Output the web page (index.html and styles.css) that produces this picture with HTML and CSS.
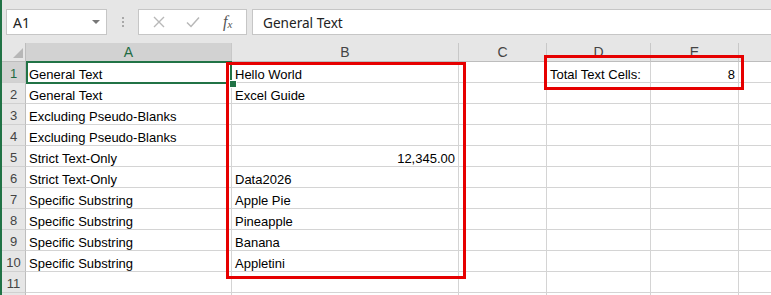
FILE: index.html
```html
<!DOCTYPE html>
<html>
<head>
<meta charset="utf-8">
<link rel="stylesheet" href="styles.css">
</head>
<body>
<div class="app">
  <div class="toolbar">
    <div class="namebox"><span class="nb-text">A1</span><span class="nb-arrow"></span></div>
    <div class="dots"><i></i><i></i><i></i></div>
    <div class="fxbox">
      <svg class="ico" width="14" height="14" viewBox="0 0 14 14"><path d="M2 2 L12 12 M12 2 L2 12" stroke="#b8b8b8" stroke-width="1.4" fill="none"/></svg>
      <svg class="ico" width="16" height="14" viewBox="0 0 16 14"><path d="M2 7.5 L6 11.5 L14 2.5" stroke="#b8b8b8" stroke-width="1.5" fill="none"/></svg>
      <span class="fx">f<sub>x</sub></span>
    </div>
    <div class="formula">General Text</div>
  </div>
  <div class="sheet">
    <div class="corner"><span class="tri"></span></div>
    <div class="ch sel">A</div><div class="ch">B</div><div class="ch">C</div><div class="ch">D</div><div class="ch">E</div><div class="ch last"></div>

    <div class="rh sel">1</div><div class="c">General Text</div><div class="c">Hello World</div><div class="c"></div><div class="c">Total Text Cells:</div><div class="c r">8</div><div class="c last"></div>
    <div class="rh">2</div><div class="c">General Text</div><div class="c">Excel Guide</div><div class="c"></div><div class="c"></div><div class="c"></div><div class="c last"></div>
    <div class="rh">3</div><div class="c">Excluding Pseudo-Blanks</div><div class="c"></div><div class="c"></div><div class="c"></div><div class="c"></div><div class="c last"></div>
    <div class="rh">4</div><div class="c">Excluding Pseudo-Blanks</div><div class="c"></div><div class="c"></div><div class="c"></div><div class="c"></div><div class="c last"></div>
    <div class="rh">5</div><div class="c">Strict Text-Only</div><div class="c r">12,345.00</div><div class="c"></div><div class="c"></div><div class="c"></div><div class="c last"></div>
    <div class="rh">6</div><div class="c">Strict Text-Only</div><div class="c">Data2026</div><div class="c"></div><div class="c"></div><div class="c"></div><div class="c last"></div>
    <div class="rh">7</div><div class="c">Specific Substring</div><div class="c">Apple Pie</div><div class="c"></div><div class="c"></div><div class="c"></div><div class="c last"></div>
    <div class="rh">8</div><div class="c">Specific Substring</div><div class="c">Pineapple</div><div class="c"></div><div class="c"></div><div class="c"></div><div class="c last"></div>
    <div class="rh">9</div><div class="c">Specific Substring</div><div class="c">Banana</div><div class="c"></div><div class="c"></div><div class="c"></div><div class="c last"></div>
    <div class="rh">10</div><div class="c">Specific Substring</div><div class="c">Appletini</div><div class="c"></div><div class="c"></div><div class="c"></div><div class="c last"></div>
    <div class="rh">11</div><div class="c"></div><div class="c"></div><div class="c"></div><div class="c"></div><div class="c"></div><div class="c last"></div>
    <div class="rh"></div><div class="c"></div><div class="c"></div><div class="c"></div><div class="c"></div><div class="c"></div><div class="c last"></div>
  </div>
  <div class="selbox"></div>
  <div class="handle"></div>
  <div class="redbox rb1"></div>
  <div class="redbox rb2"></div>
</div>
</body>
</html>
```
FILE: styles.css
```css
html, body { margin: 0; padding: 0; }
body { width: 771px; height: 295px; overflow: hidden; background: #fff; }
.app {
  position: relative;
  width: 771px; height: 295px; overflow: hidden;
  border-left: 2px solid #217346;
  box-sizing: border-box;
  font-family: "Liberation Sans", Arial, sans-serif;
}
.toolbar {
  height: 43px;
  background: #e6e6e6;
  display: flex;
  align-items: flex-start;
  padding: 9px 0 0 4px;
  box-sizing: border-box;
}
.namebox {
  width: 101px; height: 26px;
  background: #fff; border: 1px solid #c6c6c6;
  box-sizing: border-box;
  display: flex; align-items: center; justify-content: space-between;
  padding: 0 6px 0 6px;
  font-family: "Noto Sans", "Open Sans", sans-serif; font-size: 14px; color: #222;
}
.nb-arrow {
  width: 0; height: 0;
  border-left: 4px solid transparent; border-right: 4px solid transparent;
  border-top: 4px solid #777;
}
.dots {
  width: 31px; height: 26px;
  display: flex; flex-direction: column; align-items: center; justify-content: center; gap: 2px;
}
.dots i { display: block; width: 2px; height: 2px; background: #a8a8a8; }
.fxbox {
  width: 109px; height: 26px;
  background: #fff; border: 1px solid #c6c6c6; box-sizing: border-box;
  display: flex; align-items: center;
  padding-left: 13px; gap: 19px;
}
.fx {
  font-family: "Liberation Serif", "DejaVu Serif", serif; font-style: italic;
  font-size: 16px; color: #555; margin-left: 3px;
}
.fx sub { font-size: 11px; vertical-align: -1px; }
.formula {
  flex: 1; height: 26px; margin-left: 5px;
  background: #fff; border: 1px solid #c6c6c6; border-right: none; box-sizing: border-box;
  display: flex; align-items: center; padding-left: 10px;
  font-family: "Noto Sans", "Open Sans", sans-serif; font-size: 13.6px; color: #222;
}
.sheet {
  display: grid;
  grid-template-columns: 24px 206px 227px 88px 104px 88px 1fr;
  grid-template-rows: 19px;
  grid-auto-rows: 21px;
}
.corner {
  background: #e6e6e6;
  border-right: 1px solid #bdbdbd; border-bottom: 1px solid #bdbdbd;
  box-sizing: border-box; position: relative;
  display: flex; align-items: flex-end; justify-content: flex-end;
  padding: 0 2px 3px 0;
}
.tri {
  width: 0; height: 0;
  border-left: 10px solid transparent;
  border-bottom: 10px solid #b7b7b7;
}
.ch {
  background: #e6e6e6;
  border-right: 1px solid #c8c8c8; border-bottom: 1px solid #bdbdbd;
  box-sizing: border-box;
  display: flex; align-items: flex-end; justify-content: center;
  font-size: 14px; color: #444; line-height: 16px; padding-bottom: 1px;
}
.ch.sel, .rh.sel { background: #d2d2d2; color: #1f6b43; }
.ch.last, .c.last { border-right: none; }
.rh {
  background: #e6e6e6;
  border-right: 1px solid #bdbdbd; border-bottom: 1px solid #d0d0d0;
  box-sizing: border-box;
  display: flex; align-items: flex-end; justify-content: center;
  font-size: 13px; color: #444; line-height: 16px; padding-bottom: 0;
}
.c {
  border-right: 1px solid #d4d4d4; border-bottom: 1px solid #d4d4d4;
  box-sizing: border-box;
  display: flex; align-items: flex-end;
  font-size: 13px; color: #000; line-height: 15px;
  padding: 0 3px 0 3px; white-space: nowrap; overflow: hidden;
}
.c.r { justify-content: flex-end; padding-right: 3px; }
.selbox {
  position: absolute; left: 24px; top: 61px; width: 206px; height: 23px;
  border: 2px solid #217346; box-sizing: border-box;
}
.handle {
  position: absolute; left: 227px; top: 80px; width: 6px; height: 6px;
  background: #217346; border: 1px solid #fff; box-sizing: content-box;
}
.redbox { position: absolute; border: 3px solid #e60000; box-sizing: border-box; }
.rb1 { left: 224px; top: 62px; width: 240px; height: 217px; }
.rb2 { left: 542px; top: 55px; width: 200px; height: 35px; }
```
